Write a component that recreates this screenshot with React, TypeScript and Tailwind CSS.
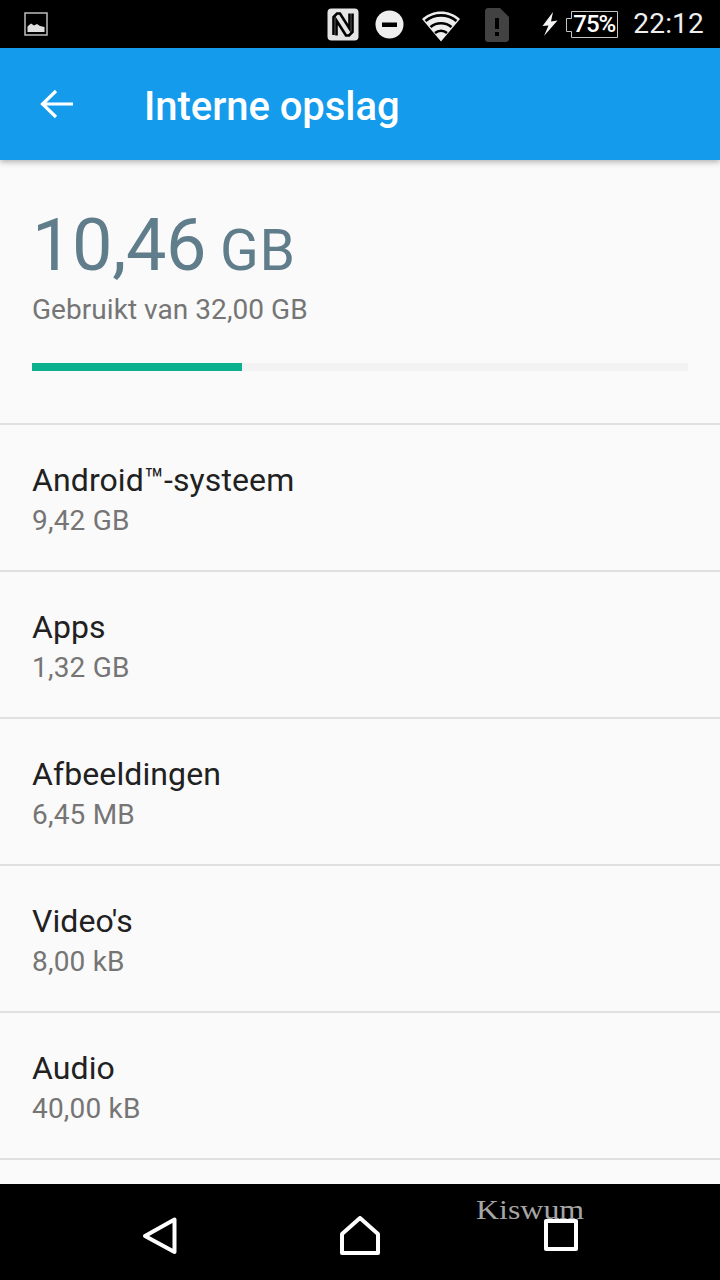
import * as React from 'react';

const rows = [
  { name: 'Android™-systeem', size: '9,42 GB' },
  { name: 'Apps', size: '1,32 GB' },
  { name: 'Afbeeldingen', size: '6,45 MB' },
  { name: "Video's", size: '8,00 kB' },
  { name: 'Audio', size: '40,00 kB' },
];

function StatusBar() {
  return (
    <div className="h-12 shrink-0 bg-black flex items-center pl-6 pr-4">
      {/* picture notification */}
      <svg width="24" height="24" viewBox="0 0 24 24" className="shrink-0">
        <rect x="1" y="1" width="22" height="22" fill="none" stroke="#bdbdbd" strokeWidth="1.5" />
        <path d="M3.5 20V14.5L7 11.5L10 13.5L13 12L16 14L20.5 15V20Z" fill="#e0e0e0" />
      </svg>
      <div className="flex-1" />
      {/* nfc */}
      <svg width="32" height="33" viewBox="0 0 32 33" className="shrink-0">
        <rect x="0.5" y="0.5" width="31" height="32" rx="4" fill="#e4e4e4" />
        <path d="M6.5 27V9L10 5.5H13L22.5 20.5V5.5" fill="none" stroke="#000" strokeWidth="2.6" />
        <path d="M25.5 5.5V24L22 27.5H19L9.5 12.5V27.5" fill="none" stroke="#000" strokeWidth="2.6" />
      </svg>
      {/* do not disturb */}
      <svg width="29" height="29" viewBox="0 0 29 29" className="ml-[16px] shrink-0">
        <circle cx="14.5" cy="14.5" r="14" fill="#eeeeee" />
        <rect x="7" y="12.5" width="15" height="4.5" fill="#000" />
      </svg>
      {/* wifi */}
      <svg width="38" height="32" viewBox="0 0 38 32" className="ml-[18px] mt-[4px] shrink-0">
        <path d="M19 31.5L0 9C10.5 -1 27.5 -1 38 9Z" fill="#eeeeee" />
        <path d="M3.5 11C12.5 3.5 25.5 3.5 34.5 11M8.5 17C14.5 12 23.5 12 29.5 17M13 23C16.5 20 21.5 20 25 23" fill="none" stroke="#000" strokeWidth="2.6" />
      </svg>
      {/* sim alert */}
      <svg width="24" height="34" viewBox="0 0 24 34" className="ml-[25px] mt-[2px] shrink-0">
        <path d="M3 0H15L24 9V31C24 32.5 23 34 21 34H3C1 34 0 32.5 0 31V3C0 1.5 1 0 3 0Z" fill="#424242" />
        <rect x="10" y="10" width="4" height="11" fill="#000" />
        <rect x="10" y="24" width="4" height="4" fill="#000" />
      </svg>
      {/* charging bolt */}
      <svg width="16" height="24" viewBox="0 0 16 24" className="ml-[33px] shrink-0">
        <path d="M11 0L0.5 14L6.5 13.5L2 24L15.5 8.5L9 9.5Z" fill="#f5f5f5" />
      </svg>
      {/* battery outline with the level printed inside */}
      <div className="ml-[8px] w-[52px] h-[27px] relative shrink-0 flex items-center justify-center">
        <svg width="52" height="27" viewBox="0 0 52 27" className="absolute inset-0">
          <path d="M5.5 0.5H51.5V26.5H5.5V20.5H0.5V7.5H5.5Z" fill="none" stroke="#c4c4c4" strokeWidth="1" />
        </svg>
        <span className="relative ml-[4px] text-white text-[24px] font-medium tracking-[-1px] leading-none">75%</span>
      </div>
      <span className="ml-[15px] text-[#eeeeee] text-[28px] tracking-[0.2px] leading-none">22:12</span>
    </div>
  );
}

function AppBar() {
  return (
    <div className="relative z-10 h-28 shrink-0 bg-[#149bec] flex items-center shadow-[0_2px_6px_rgba(0,0,0,0.3)]">
      <svg width="36" height="36" viewBox="0 0 36 36" className="ml-[39px] shrink-0">
        <path d="M34 18H4M17 5L3.5 18L17 31" fill="none" stroke="#fff" strokeWidth="3.2" />
      </svg>
      <span className="ml-[69px] mt-[5px] text-white text-[40px] tracking-[-0.05px] font-medium leading-none">Interne opslag</span>
    </div>
  );
}

function Summary() {
  return (
    <div className="h-[265px] px-8 pt-[50px] border-b-2 border-[#e0e0e0]">
      <div className="flex items-baseline text-[#607d8b] leading-none h-[81px]">
        <span className="text-[72px] tracking-[-0.4px]">10,46</span>
        <span className="ml-[14px] text-[57px] tracking-[0.6px]">GB</span>
      </div>
      <div className="mt-[1px] text-[#757575] text-[28px] tracking-[0.05px] leading-[36px]">Gebruikt van 32,00 GB</div>
      <div className="mt-[35px] h-2 bg-[#f2f2f2]">
        <div className="h-full w-[32%] bg-[#0bb08d]" />
      </div>
    </div>
  );
}

function StorageRow({ name, size }: { name: string; size: string }) {
  return (
    <div className="h-[147px] px-8 pt-[35px] border-b-2 border-[#e0e0e0]">
      <div className="text-[#212121] text-[32px] tracking-[0.1px] leading-[40px]">{name}</div>
      <div className="mt-[1px] text-[#757575] text-[28px] tracking-[0.2px] leading-[40px]">{size}</div>
    </div>
  );
}

function NavBar() {
  return (
    <div className="relative h-24 shrink-0 bg-black">
      <div className="h-full flex items-center">
        <svg width="36" height="40" viewBox="0 0 36 40" className="ml-[142px] mt-[7px] shrink-0">
          <path d="M32.5 3.5V36L3 20Z" fill="none" stroke="#fff" strokeWidth="4" strokeLinejoin="round" />
        </svg>
        <svg width="40" height="40" viewBox="0 0 40 40" className="ml-[162px] mt-[7px] shrink-0">
          <path d="M2 37V18L20 2L38 18V37Z" fill="none" stroke="#fff" strokeWidth="4" strokeLinejoin="round" />
        </svg>
        <svg width="34" height="34" viewBox="0 0 34 34" className="ml-[164px] mt-[7px] shrink-0">
          <rect x="2" y="2" width="30" height="28" fill="none" stroke="#fff" strokeWidth="4" strokeLinejoin="round" />
        </svg>
      </div>
      {/* watermark across the recents button */}
      <span className="absolute left-[476px] top-[10px] origin-left scale-x-[1.14] text-[#a6a6a6] text-[28px] leading-[32px] font-['Liberation_Serif',serif]">Kiswum</span>
    </div>
  );
}

export default function App() {
  return (
    <div className="w-[720px] h-[1280px] flex flex-col overflow-hidden bg-[#fafafa] font-['Roboto',sans-serif]">
      <StatusBar />
      <AppBar />
      <div className="flex-1 overflow-hidden">
        <Summary />
        {rows.map((row) => (
          <StorageRow key={row.name} name={row.name} size={row.size} />
        ))}
      </div>
      <NavBar />
    </div>
  );
}
